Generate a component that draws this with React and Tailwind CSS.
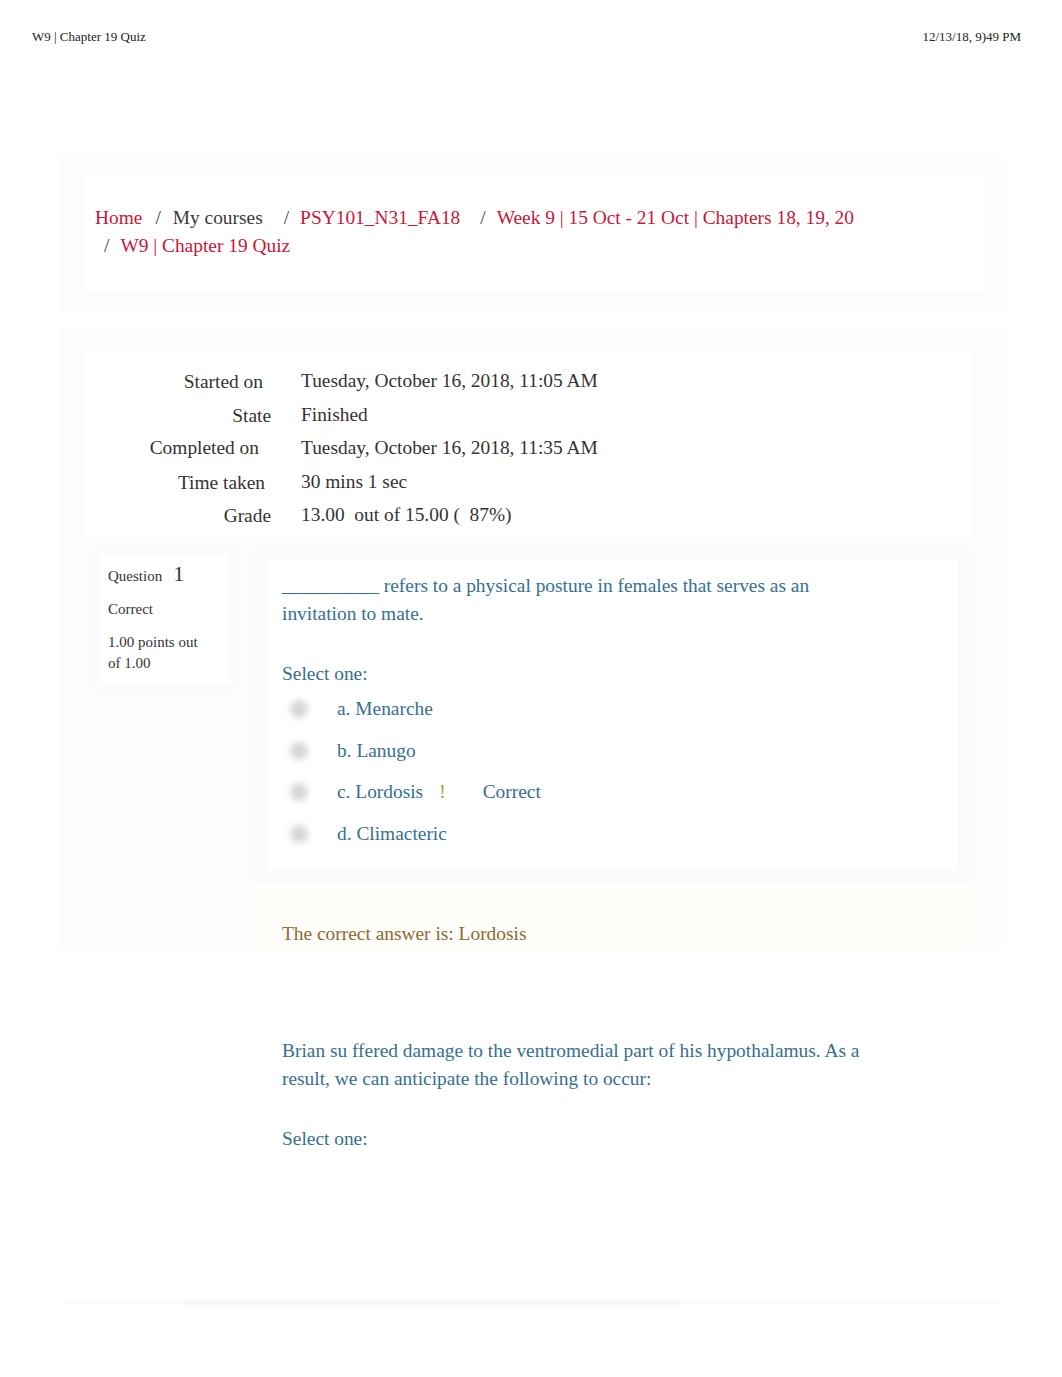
import React from "react";

const teal = "text-[#35708f]";

function Radio() {
  return (
    <div className="w-[34px] flex justify-center">
      <div className="w-[18px] h-[18px] rounded-full bg-[#d6d6d6] blur-[3px]" />
    </div>
  );
}

function Option({ label, extra }) {
  return (
    <div className="flex items-center h-[41.5px]">
      <Radio />
      <div className={`ml-[21px] ${teal}`}>{label}</div>
      {extra}
    </div>
  );
}

export default function App() {
  return (
    <div className="w-[1062px] min-h-[1377px] bg-white font-['Liberation_Serif',serif] text-[#333]">
      {/* print header */}
      <div className="flex justify-between px-[32px] pt-[29px] text-[13px] leading-[16px] text-[#222]">
        <span>W9 | Chapter 19 Quiz</span>
        <span className="mr-[9px]">12/13/18, 9)49 PM</span>
      </div>

      {/* breadcrumb panel */}
      <div className="mx-[62px] mt-[110px] bg-[#fcfcfc] shadow-[0_0_8px_#f9f9f9] pt-[20px] pb-[18px] pl-[20px] pr-[15px]">
        <div className="bg-white pt-[29px] pb-[32px] pl-[13px] text-[19.4px] leading-[28px]">
          <div className="flex whitespace-nowrap">
            <span className="text-[#c8173a]">Home</span>
            <span className="ml-[13px] text-[#444]">/</span>
            <span className="ml-[12px] text-[#3a3a3a]">My courses</span>
            <span className="ml-[21px] text-[#444]">/</span>
            <span className="ml-[11px] text-[#c8173a]">PSY101_N31_FA18</span>
            <span className="ml-[20px] text-[#444]">/</span>
            <span className="ml-[11px] text-[#c8173a]">Week 9 | 15 Oct - 21 Oct | Chapters 18, 19, 20</span>
          </div>
          <div className="flex whitespace-nowrap">
            <span className="ml-[9px] text-[#444]">/</span>
            <span className="ml-[11px] text-[#c8173a]">W9 | Chapter 19 Quiz</span>
          </div>
        </div>
      </div>

      {/* quiz panel */}
      <div className="mx-[62px] mt-[20px] bg-[#fcfcfc] shadow-[0_0_8px_#f9f9f9] pt-[20px] pl-[20px] pr-[30px]">
        <div className="bg-white pt-[14px] pb-[6px] text-[19.4px] text-[#333]">
          {[
            ["Started on", "Tuesday, October 16, 2018, 11:05 AM", "pr-[8px]"],
            ["State", "Finished", "pr-0"],
            ["Completed on", "Tuesday, October 16, 2018, 11:35 AM", "pr-[12px]"],
            ["Time taken", "30 mins 1 sec", "pr-[6px]"],
            ["Grade", "13.00  out of 15.00 (  87%)", "pr-0"],
          ].map(([k, v, pr], i) => (
            <div key={k} className="flex items-center h-[33.5px]">
              <div className={`w-[189px] shrink-0 text-right whitespace-nowrap ${pr} ${i !== 2 ? "translate-y-[1px]" : ""}`}>{k}</div>
              <div className="ml-[30px] whitespace-pre">{v}</div>
            </div>
          ))}
        </div>

        <div className="flex mt-[10px]">
          {/* info box */}
          <div className="ml-[13px] w-[140px] h-[142px] bg-[#fbfbfb] p-[6px] shadow-[0_0_6px_#f7f7f7]">
            <div className="bg-white h-full pl-[7px] pt-[10px] text-[15px] text-[#333]">
              <div className="flex items-baseline leading-[20px]">
                <span>Question</span>
                <span className="ml-[11px] text-[22px]">1</span>
              </div>
              <div className="mt-[14px] leading-[18px]">Correct</div>
              <div className="mt-[14px] leading-[21px] whitespace-nowrap">
                1.00 points out
                <br />
                of 1.00
              </div>
            </div>
          </div>

          {/* question content */}
          <div className="ml-[20px] flex-1 flex flex-col">
            <div className="bg-[#fafbfb] pt-[12px] pl-[13px] pr-[12px] pb-[15px] shadow-[0_0_6px_#f5f8f8]">
              <div className="bg-white pt-[12px] pb-[15px] pl-[14px] text-[19.4px] leading-[28px]">
                <div className={`${teal} whitespace-nowrap`}>
                  __________ refers to a physical posture in females that serves as an
                  <br />
                  invitation to mate.
                </div>
                <div className={`mt-[32px] mb-[1px] ${teal}`}>Select one:</div>
                <Option label="a. Menarche" />
                <Option label="b. Lanugo" />
                <Option
                  label="c. Lordosis"
                  extra={
                    <>
                      <span className="ml-[16px] text-[#7ab32e]">!</span>
                      <span className={`ml-[37px] ${teal}`}>Correct</span>
                    </>
                  }
                />
                <Option label="d. Climacteric" />
              </div>
            </div>
            <div className="h-[63px] mr-[-5px] bg-[#fffefb] pl-[27px] pt-[37px] text-[19.4px] leading-[24px] text-[#8c6a30]">
              The correct answer is: Lordosis
            </div>
          </div>
        </div>
      </div>

      {/* next question (unboxed in print) */}
      <div className={`pl-[282px] pt-[89px] text-[19.4px] leading-[28px] ${teal}`}>
        <div className="whitespace-nowrap">
          Brian su ffered damage to the ventromedial part of his hypothalamus. As a
          <br />
          result, we can anticipate the following to occur:
        </div>
        <div className="mt-[32px]">Select one:</div>
      </div>

      {/* faint cut-off edge */}
      <div className="mx-[62px] mt-[148px] relative h-[3px] bg-[#fbfcfd]">
        <div className="absolute left-[120px] w-[500px] top-0 h-[3px] bg-[#eef3f7] blur-[2px]" />
      </div>
    </div>
  );
}
